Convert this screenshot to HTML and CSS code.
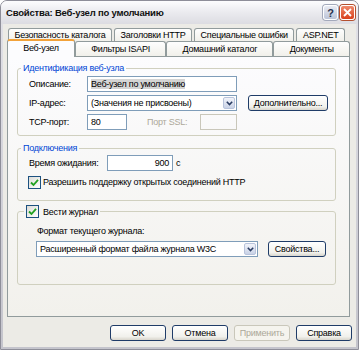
FILE: index.html
```html
<!DOCTYPE html>
<html lang="ru">
<head>
    <meta charset="UTF-8">
    <title>Свойства: Веб-узел по умолчанию</title>
    <link rel="stylesheet" href="styles.css">
</head>
<body>
    <div class="window">
        <div class="titlebar">
            <span class="title">Свойства: Веб-узел по умолчанию</span>
            <span class="tb-btn help">?</span>
            <span class="tb-btn close">
                <svg width="9" height="9" viewBox="0 0 9 9"><path d="M1 1 L8 8 M8 1 L1 8" stroke="#fff" stroke-width="1.8" fill="none"/></svg>
            </span>
        </div>
        <div class="client">
            <div class="tabs back">
                <span class="tab">Безопасность каталога</span>
                <span class="tab">Заголовки HTTP</span>
                <span class="tab">Специальные ошибки</span>
                <span class="tab">ASP.NET</span>
            </div>
            <div class="tabs front">
                <span class="tab active">Веб-узел</span>
                <span class="tab">Фильтры ISAPI</span>
                <span class="tab">Домашний каталог</span>
                <span class="tab">Документы</span>
            </div>
            <div class="panel">
                <fieldset class="group ident">
                    <legend>Идентификация веб-узла</legend>
                    <div class="row">
                        <span class="label">Описание:</span>
                        <span class="field w-desc"><span class="sel">Веб-узел по умолчанию</span></span>
                    </div>
                    <div class="row">
                        <span class="label">IP-адрес:</span>
                        <span class="field combo w-desc">
                            <span class="combo-text">(Значения не присвоены)</span>
                            <span class="drop"><svg width="7" height="5" viewBox="0 0 7 5"><path d="M0.8 0.8 L3.5 3.5 L6.2 0.8" stroke="#2b3d63" stroke-width="1.6" fill="none"/></svg></span>
                        </span>
                        <button class="btn btn-more">Дополнительно...</button>
                    </div>
                    <div class="row">
                        <span class="label">TCP-порт:</span>
                        <span class="field w-port">80</span>
                        <span class="muted ssl-label">Порт SSL:</span>
                        <span class="field disabled w-ssl"></span>
                    </div>
                </fieldset>

                <fieldset class="group conn">
                    <legend>Подключения</legend>
                    <div class="row">
                        <span class="label wide">Время ожидания:</span>
                        <span class="field w-time num">900</span>
                        <span class="unit">с</span>
                    </div>
                    <div class="row check-row">
                        <span class="check"><svg width="9" height="9" viewBox="0 0 9 9"><path d="M1 4.5 L3.5 7 L8 1.8" stroke="#21a121" stroke-width="1.8" fill="none"/></svg></span>
                        <span>Разрешить поддержку открытых соединений HTTP</span>
                    </div>
                </fieldset>

                <fieldset class="group log">
                    <legend>
                        <span class="check"><svg width="9" height="9" viewBox="0 0 9 9"><path d="M1 4.5 L3.5 7 L8 1.8" stroke="#21a121" stroke-width="1.8" fill="none"/></svg></span>
                        <span>Вести журнал</span>
                    </legend>
                    <div class="log-caption">Формат текущего журнала:</div>
                    <div class="row">
                        <span class="field combo w-format">
                            <span class="combo-text">Расширенный формат файла журнала W3C</span>
                            <span class="drop"><svg width="7" height="5" viewBox="0 0 7 5"><path d="M0.8 0.8 L3.5 3.5 L6.2 0.8" stroke="#2b3d63" stroke-width="1.6" fill="none"/></svg></span>
                        </span>
                        <button class="btn btn-props">Свойства...</button>
                    </div>
                </fieldset>
            </div>
            <div class="actions">
                <button class="btn">OK</button>
                <button class="btn">Отмена</button>
                <button class="btn" disabled>Применить</button>
                <button class="btn">Справка</button>
            </div>
        </div>
    </div>
</body>
</html>
```

FILE: styles.css
```css
body {
    margin: 0;
    font-family: "Liberation Sans", Arial, sans-serif;
    font-size: 9px;
    letter-spacing: -0.25px;
    color: #000;
    background: #fff;
}
.window {
    width: 359px;
    height: 350px;
    box-sizing: border-box;
    border: 1px solid #8e8e99;
    border-radius: 7px 7px 0 0;
    background: linear-gradient(#e2e2e8, #c4c4cc);
    display: flex;
    flex-direction: column;
    overflow: hidden;
}
.titlebar {
    height: 23px;
    display: flex;
    align-items: center;
    padding: 0 3px 0 5px;
    background: linear-gradient(#fdfdfe, #ececf0 45%, #dcdce2);
}
.title {
    flex: 1;
    font-size: 9.5px;
    font-weight: bold;
    letter-spacing: -0.2px;
    color: #111;
}
.tb-btn {
    width: 15px;
    height: 15px;
    box-sizing: border-box;
    border: 1px solid #fff;
    border-radius: 3px;
    display: flex;
    align-items: center;
    justify-content: center;
    margin-left: 2px;
}
.help {
    background: linear-gradient(#e9ebf3, #bcc4d8);
    color: #28324f;
    font-weight: bold;
    font-size: 11px;
    letter-spacing: 0;
    box-shadow: 0 0 0 1px #a3a9bb;
}
.close {
    background: linear-gradient(#ef8a6c, #d8401c);
    box-shadow: 0 0 0 1px #b4502e;
}
.client {
    flex: 1;
    margin: 0 2px 2px;
    padding: 4px 4px 0;
    background: #ecebe6;
}

/* tabs */
.tabs {
    display: flex;
}
.tabs.back {
    height: 13px;
    gap: 2px;
    margin: 0 7px 0 1px;
}
.tabs.front {
    height: 15px;
    margin-right: 2px;
}
.tab {
    flex: 1 1 auto;
    box-sizing: border-box;
    border: 1px solid #919b9c;
    border-bottom: none;
    border-radius: 3px 3px 0 0;
    background: linear-gradient(#fefefe, #f1f0ea);
    text-align: center;
    line-height: 12px;
    white-space: nowrap;
}
.tabs.front .tab {
    line-height: 14px;
}
.tab.active {
    position: relative;
    z-index: 1;
    height: 18px;
    margin-top: -2px;
    border-top: 2px solid #f2a23a;
    background: #fcfcfe;
    line-height: 15px;
}

.panel {
    height: 261px;
    box-sizing: border-box;
    margin-right: 2px;
    border: 1px solid #919b9c;
    background: linear-gradient(#fcfcfe, #f2f1ec);
    padding: 5px 0 0 9px;
}

/* group boxes */
.group {
    width: 319px;
    box-sizing: border-box;
    margin: 0;
    border: 1px solid #d0d0bf;
    border-radius: 3px;
    padding: 2px 4px 5px 11px;
}
.group legend {
    color: #0046d5;
    padding: 0 2px;
    margin-left: -8px;
    line-height: 12px;
}
.group.conn {
    margin-top: 6px;
    padding-top: 1px;
    padding-bottom: 10px;
}
.group.log {
    margin-top: 4px;
    padding: 4px 4px 27px 18px;
}
.group.log legend {
    display: flex;
    align-items: center;
    gap: 2px;
    color: #000;
    margin-left: -12px;
}

.row {
    display: flex;
    align-items: center;
    height: 16px;
    white-space: nowrap;
}
.row + .row {
    margin-top: 3px;
}
.label {
    width: 58px;
    flex: none;
}
.label.wide {
    width: 78px;
}
.field {
    height: 16px;
    box-sizing: border-box;
    border: 1px solid #7f9db9;
    background: #fff;
    padding: 0 3px;
    display: flex;
    align-items: center;
    flex: none;
    white-space: nowrap;
    overflow: hidden;
}
.field.disabled {
    border-color: #c9c7ba;
    background: transparent;
}
.sel {
    background: #d4d4d4;
}
.w-desc {
    width: 150px;
}
.w-port {
    width: 40px;
}
.w-ssl {
    width: 37px;
}
.w-time {
    width: 66px;
}
.w-format {
    width: 222px;
}
.num {
    justify-content: flex-end;
}
.unit {
    margin-left: 3px;
}
.muted {
    color: #aca899;
}
.ssl-label {
    margin: 0 8px 0 20px;
    width: 45px;
}
.combo {
    padding-right: 1px;
}
.combo-text {
    flex: 1;
}
.drop {
    width: 12px;
    height: 12px;
    box-sizing: border-box;
    border: 1px solid #b8c3db;
    border-radius: 2px;
    background: linear-gradient(#f2f4fa, #c9d2e6);
    display: flex;
    align-items: center;
    justify-content: center;
}
.check-row {
    margin-left: -1px;
}
.check {
    width: 13px;
    height: 13px;
    box-sizing: border-box;
    border: 1px solid #1c5180;
    background: linear-gradient(135deg, #dcdcd7, #fff);
    display: flex;
    align-items: center;
    justify-content: center;
    margin-right: 2px;
    flex: none;
}
.log-caption {
    height: 13px;
    line-height: 13px;
    margin: 3px 0 3px 1px;
}

/* buttons */
.btn {
    height: 16px;
    box-sizing: border-box;
    border: 1px solid #1f3c68;
    border-radius: 3px;
    background: linear-gradient(#ffffff, #f1f1ec 75%, #d8d5cc);
    font: inherit;
    letter-spacing: inherit;
    color: #000;
    padding: 0;
    flex: none;
}
.btn:disabled {
    border-color: #c9c7ba;
    color: #aca899;
    background: #f5f4ee;
}
.btn-more {
    width: 80px;
    margin-left: 11px;
}
.btn-props {
    width: 58px;
    margin-left: 10px;
}
.actions {
    display: flex;
    justify-content: flex-end;
    gap: 6px;
    margin-top: 8px;
}
.actions .btn {
    width: 56px;
}
```
